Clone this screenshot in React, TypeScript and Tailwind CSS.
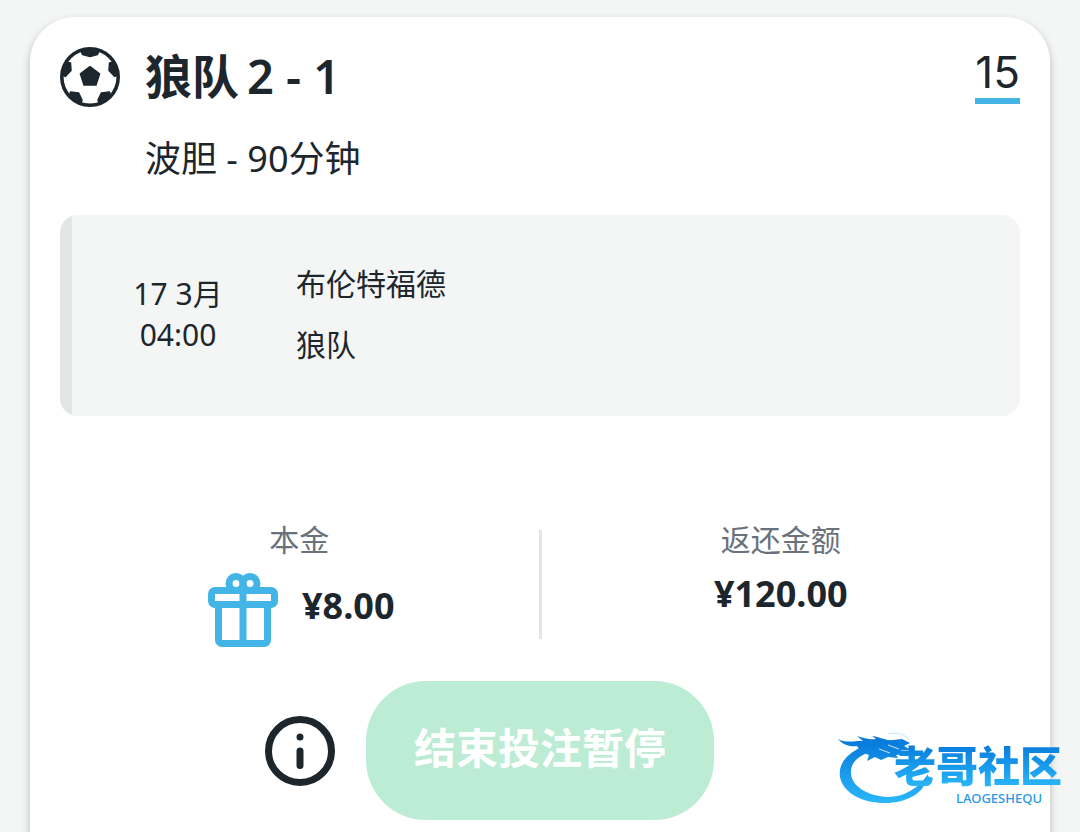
function BallIcon() {
  return (
    <svg viewBox="0 0 60 60" className="size-[60px] shrink-0" aria-hidden="true">
      <defs>
        <clipPath id="ball">
          <circle cx="30" cy="30" r="29" />
        </clipPath>
      </defs>
      <circle cx="30" cy="30" r="28.2" fill="#fff" stroke="#1e262d" strokeWidth="3.6" />
      <g fill="#1e262d" stroke="#1e262d" strokeWidth="1.5" strokeLinejoin="round">
        <path d="M30 19.7 39.6 26.8 36 38.1H24L20.4 26.8Z" />
        <g clipPath="url(#ball)">
          <path d="M20 2H40L37.5 7.5 30 9.6 22.5 7.5Z" />
          <path d="M59 12 53.5 15.2 49.5 16 49 23.5 54.7 29.4 60 27Z" />
          <path d="M1 12 6.5 15.2 10.5 16 11 23.5 5.3 29.4 0 27Z" />
          <path d="M51 52 49.5 45 41.3 46 38 53 39.5 58Z" />
          <path d="M9 52 10.5 45 18.7 46 22 53 20.5 58Z" />
        </g>
      </g>
    </svg>
  );
}

function GiftIcon() {
  return (
    <svg
      viewBox="0 0 70 74"
      className="h-[74px] w-[70px] shrink-0"
      fill="none"
      stroke="#42b4e6"
      strokeWidth="7"
      aria-hidden="true"
    >
      <circle cx="28" cy="10.5" r="7" />
      <circle cx="42" cy="10.5" r="7" />
      <rect x="3.5" y="17.5" width="63" height="14" rx="3.5" />
      <path d="M10.5 31.5V67a3.5 3.5 0 0 0 3.5 3.5H56a3.5 3.5 0 0 0 3.5-3.5V31.5M35 12V70" />
    </svg>
  );
}

function InfoIcon() {
  return (
    <svg
      viewBox="0 0 70 70"
      className="size-[70px]"
      fill="none"
      stroke="#1e262d"
      strokeWidth="7"
      strokeLinecap="round"
      aria-hidden="true"
    >
      <circle cx="35" cy="35" r="31.5" />
      <path d="M35 35V49.5M35 21V21.01" />
    </svg>
  );
}

function CommunityLogo() {
  return (
    <div className="pointer-events-none absolute -right-3 bottom-6 flex h-[76px] w-[226px] justify-end">
      <svg viewBox="0 0 100 76" className="absolute top-0 left-0 h-[76px] w-[100px]" aria-hidden="true">
        <defs>
          <linearGradient id="dragon" gradientUnits="userSpaceOnUse" x1="0" y1="10" x2="0" y2="72">
            <stop offset="0" stopColor="#087bdc" />
            <stop offset="1" stopColor="#2bb8fa" />
          </linearGradient>
        </defs>
        <g fill="url(#dragon)">
          <path d="M28 14C11 21 2 32 4 45C7 61 26 71 49 71C71 71 90 61 92 42C83 56 68 65 52 65C31 64 16 54 15 42C14 31 22 24 34 20Z" />
          <path d="M2 7C7 10 14 10 21 9L27 9 21 4C28 6 34 8 40 7L36 4C45 5 50 9 57 8L66 7 74 11 68 14 75 18 64 18 72 22 60 23 62 26 52 25 45 28 39 25 31 29 33 23 25 20 21 14C14 15 7 13 2 7Z" />
        </g>
        <path d="M52 2C62 0 69 2 74 9M43 17 54 21M52 13 63 17" fill="none" stroke="#c5e4f9" strokeWidth="1" />
      </svg>
      <div className="relative pt-3 text-right">
        <p className="bg-linear-to-b from-[#087bdc] to-[#2bb8fa] bg-clip-text text-[42px] leading-11 font-black text-transparent">
          老哥社区
        </p>
        <p className="mt-1 pr-5 text-[13px] leading-3 font-medium text-[#2599e8]">LAOGESHEQU</p>
      </div>
    </div>
  );
}

export default function App() {
  return (
    <div className="flex min-h-screen flex-col overflow-hidden bg-[#f4f6f6] px-[30px] pt-[17px] font-['Noto_Sans','Noto_Sans_CJK_SC',sans-serif] text-[#1e262d]">
      <main
        lang="zh-CN"
        className="relative flex-1 rounded-t-[45px] bg-white px-[30px] pt-[30px] pb-3 shadow-[0_4px_8px_rgba(0,0,0,0.25)]"
      >
        <header className="flex items-start">
          <BallIcon />
          <div className="ml-[25px] flex-1">
            <h1 className="flex gap-2 text-[47px] leading-[58px] font-semibold">
              <span>狼队</span>
              <span>2 - 1</span>
            </h1>
            <p className="mt-6 text-[36px] leading-[60px]">波胆 - 90分钟</p>
          </div>
          <span className="border-b-6 border-[#42b4e6] pt-[2px] pb-[2px] font-['Inter',sans-serif] text-[44px] leading-[47px]">
            15
          </span>
        </header>

        <section className="mt-[26px] flex min-h-[201px] overflow-hidden rounded-[18px] bg-[#f4f6f6] text-[30px]">
          <div className="w-3 bg-[#e1e5e6]" />
          <div className="flex items-center pb-1">
            <time className="w-[212px] text-center leading-[41px]">
              17 3月
              <br />
              04:00
            </time>
            <ul className="pl-3 leading-[61px]">
              <li>布伦特福德</li>
              <li>狼队</li>
            </ul>
          </div>
        </section>

        <dl className="mt-[104px] flex">
          <div className="flex flex-1 flex-col items-center">
            <dt className="text-[30px] leading-10 text-[#69727b]">本金</dt>
            <dd className="mt-[13px] flex items-center gap-6 pl-1 text-[36px] leading-[42px] font-bold">
              <GiftIcon />
              <span className="pb-2">¥8.00</span>
            </dd>
          </div>
          <div className="mt-[10px] mb-2 w-[3px] bg-[#e1e5e6]" />
          <div className="flex flex-1 flex-col items-center">
            <dt className="text-[30px] leading-10 text-[#69727b]">返还金额</dt>
            <dd className="mt-[13px] text-[36px] leading-[42px] font-bold">¥120.00</dd>
          </div>
        </dl>

        <footer className="mt-[34px] grid grid-cols-[1fr_auto_1fr] items-center gap-[31px]">
          <button type="button" aria-label="投注信息" className="justify-self-end">
            <InfoIcon />
          </button>
          <button
            type="button"
            disabled
            className="h-[139px] rounded-[60px] bg-[#bdecd4] px-12 pb-[6px] text-[42px] font-bold text-white"
          >
            结束投注暂停
          </button>
        </footer>

        <CommunityLogo />
      </main>
    </div>
  );
}
